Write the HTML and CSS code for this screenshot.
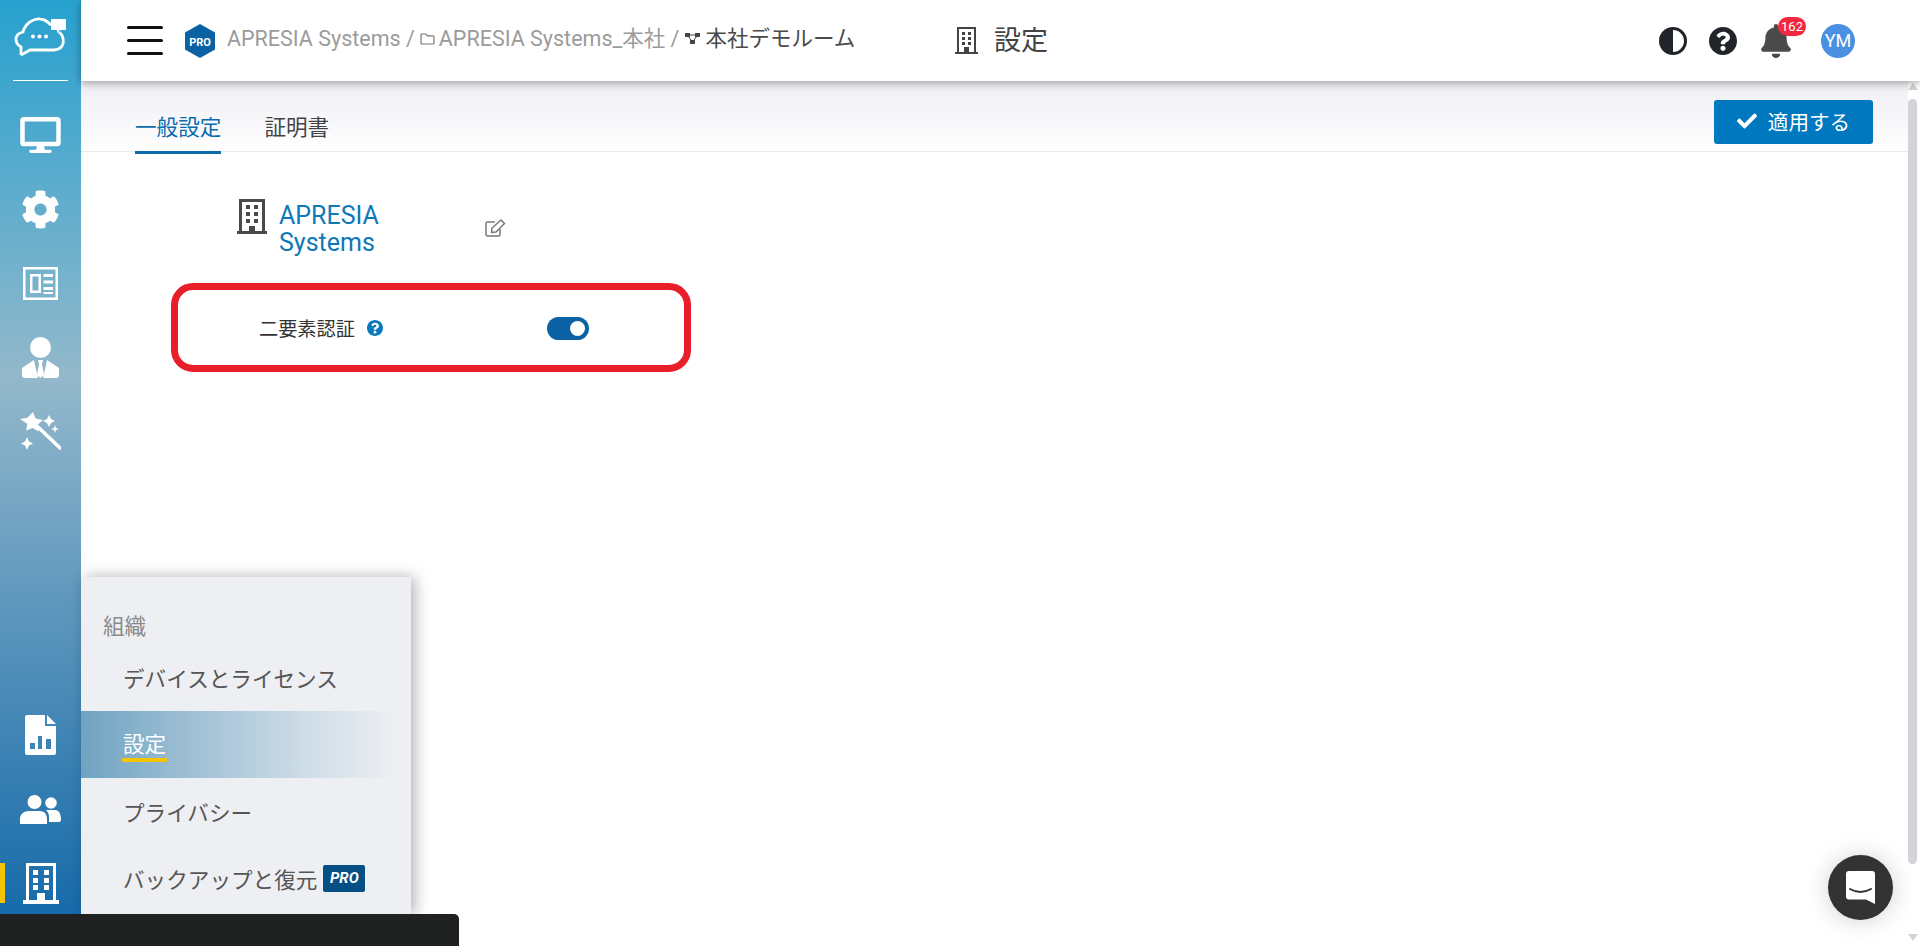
FILE: index.html
```html
<!DOCTYPE html>
<html lang="ja">
<head>
  <meta charset="UTF-8">
  <title>設定</title>
  <link rel="stylesheet" href="styles.css">
</head>
<body>
  <div class="app">
    <aside class="sidebar">
      <div class="logo">
        <svg width="54" height="42" viewBox="14 17 52 42" fill="none" stroke="#fff" stroke-width="2.8">
          <path d="M20 55V47C13 43 13 34 22 32C24 24 32 18 39 19C44 19 47 22 50 25"/>
          <path d="M58 32C64 37 65 49 53 50H29L20 55" stroke-linejoin="round"/>
          <path d="M50 19H65V30H59L56 33V30H50Z" fill="#fff" stroke="none"/>
          <circle cx="32" cy="36.500" r="2" fill="#fff" stroke="none"/>
          <circle cx="38.500" cy="36.500" r="2" fill="#fff" stroke="none"/>
          <circle cx="45" cy="36.500" r="2" fill="#fff" stroke="none"/>
        </svg>
      </div>
      <nav class="side-top">
        <div class="side-item">
          <svg width="41" height="36" viewBox="0 0 576 512" fill="#fff"><path d="M528 0H48C21.500 0 0 21.500 0 48v320c0 26.500 21.500 48 48 48h192l-16 48h-72c-13.300 0-24 10.700-24 24s10.700 24 24 24h272c13.300 0 24-10.700 24-24s-10.700-24-24-24h-72l-16-48h192c26.500 0 48-21.500 48-48V48c0-26.500-21.500-48-48-48zm-16 352H64V64h448v288z"/></svg>
        </div>
        <div class="side-item">
          <svg width="39" height="39" viewBox="0 0 512 512" fill="#fff"><path d="M487.400 315.700l-42.600-24.600c4.300-23.200 4.300-47 0-70.200l42.600-24.600c4.900-2.800 7.100-8.600 5.500-14-11.100-35.600-30-67.800-54.700-94.600-3.800-4.100-10-5.100-14.800-2.300L380.800 110c-17.900-15.400-38.500-27.300-60.800-35.100V25.800c0-5.600-3.900-10.500-9.400-11.700-36.700-8.200-74.300-7.800-109.200 0-5.500 1.200-9.400 6.100-9.400 11.700V75c-22.200 7.900-42.800 19.800-60.800 35.100L88.700 85.500c-4.900-2.800-11-1.900-14.800 2.300-24.700 26.700-43.600 58.900-54.700 94.600-1.700 5.400.6 11.200 5.500 14L67.300 221c-4.300 23.200-4.300 47 0 70.200l-42.600 24.600c-4.900 2.800-7.100 8.600-5.500 14 11.100 35.600 30 67.800 54.700 94.600 3.800 4.100 10 5.100 14.800 2.300l42.600-24.600c17.900 15.400 38.500 27.300 60.800 35.100v49.200c0 5.600 3.900 10.500 9.400 11.700 36.700 8.200 74.300 7.800 109.200 0 5.500-1.200 9.400-6.100 9.400-11.700v-49.200c22.200-7.900 42.800-19.800 60.800-35.100l42.600 24.600c4.900 2.800 11 1.900 14.800-2.300 24.700-26.700 43.600-58.900 54.700-94.600 1.500-5.500-.7-11.300-5.600-14.100zM256 336c-44.100 0-80-35.900-80-80s35.900-80 80-80 80 35.900 80 80-35.900 80-80 80z"/></svg>
        </div>
        <div class="side-item">
          <svg width="35" height="33" viewBox="0 0 35 33" fill="#fff"><path fill-rule="evenodd" d="M0 0H35V33H0ZM2.500 2.500V30.500H32.500V2.500ZM7 7H18V26H7ZM9.500 9.500V23.500H15.500V9.500ZM20.500 7H30V10H20.500ZM20.500 13.500H30V16.500H20.500ZM20.500 20H30V23H20.500ZM20.500 25H30V27H20.500Z"/></svg>
        </div>
        <div class="side-item">
          <svg width="37" height="41" viewBox="0 0 37 41" fill="#fff"><circle cx="18.500" cy="10.500" r="10.500"/><path d="M12 23L0 31V38Q0 41 3 41H16L13 28ZM25 23L37 31V38Q37 41 34 41H21L24 28ZM16 23H21L20 27L22 38L18.500 41L15 38L17 27Z"/></svg>
        </div>
        <div class="side-item">
          <svg class="side-wand" width="41" height="41" viewBox="0 0 41 41" fill="#fff"><path d="M13 0L15.500 6.500L23 8L18 12.500L18.500 19.500L12.500 16L6 18.500L7.500 12L0 7L7.500 5.800Z"/><path d="M18 15L40 36" stroke="#fff" stroke-width="3.600" stroke-linecap="round"/><path d="M29 3L31 7L35 9L31 11L29 15L27 11L23 9L27 7ZM35 13L36 16L39 17L36 18L35 21L34 18L31 17L34 16ZM7 25L9 29.500L13 31.500L9 33.500L7 38L5 33.500L1 31.500L5 29.500Z"/></svg>
        </div>
      </nav>
      <nav class="side-bottom">
        <div class="side-item">
          <svg width="31" height="40" viewBox="0 0 31 40" fill="#fff"><path fill-rule="evenodd" d="M2 0H20V11H31V38Q31 40 29 40H2Q0 40 0 38V2Q0 0 2 0ZM5 28V34H10V28ZM13 21V34H17V21ZM21 24V34H26V24Z"/><path d="M22 0L31 9H22Z"/></svg>
        </div>
        <div class="side-item">
          <svg width="41" height="29" viewBox="0 0 41 29" fill="#fff"><circle cx="14.500" cy="7" r="7"/><circle cx="31" cy="8" r="5.800"/><path d="M0 29V24C0 19 4 16 9 16H20C25 16 27 20 27 24V29ZM29 27V22C29 19 28 17 26 15H35C39 15 41 19 41 25Q41 27 39 27Z"/></svg>
        </div>
        <div class="side-item side-item-current">
          <svg width="36" height="41" viewBox="0 0 36 41" fill="#fff"><path fill-rule="evenodd" d="M3 0H33V37H36V41H0V37H3ZM6 3V37H14V30H22V37H30V3ZM10 7H15V12H10ZM21 7H26V12H21ZM10 15H15V20H10ZM21 15H26V20H21ZM10 22H15V27H10ZM21 22H26V27H21Z"/></svg>
        </div>
      </nav>
    </aside>

    <div class="page">
      <header class="topbar">
        <div class="hamburger"><span></span><span></span><span></span></div>
        <div class="crumbs">
          <svg class="pro-hex" width="30" height="34" viewBox="0 0 30 34"><path d="M15 0L30 8.500V25.500L15 34L0 25.500V8.500Z" fill="#0a62a5"/><text x="15" y="21.500" text-anchor="middle" class="pro-hex-text">PRO</text></svg>
          <span class="crumb">APRESIA Systems /</span>
          <svg class="crumb-icon" width="15" height="12" viewBox="0 0 15 12" fill="none" stroke="#777" stroke-width="1.200"><path d="M1 2Q1 1 2 1H6L7.500 2.800H13Q14 2.800 14 3.800V10Q14 11 13 11H2Q1 11 1 10Z"/></svg>
          <span class="crumb">APRESIA Systems_本社 /</span>
          <svg class="crumb-icon crumb-icon-last" width="15" height="13" viewBox="0 0 15 13" fill="#444"><rect x="0" y="1" width="5" height="4"/><rect x="10" y="1" width="5" height="4"/><rect x="5" y="8" width="5" height="4"/><path d="M3 4L7.500 10M12 4L7.500 10M3 3H12" stroke="#444" stroke-width="1"/></svg>
          <span class="crumb crumb-current">本社デモルーム</span>
        </div>
        <div class="page-title">
          <svg width="23" height="27" viewBox="0 0 23 27" fill="#444"><path fill-rule="evenodd" d="M2 0H21V25H23V27H0V25H2ZM4 2V25H9V20H14V25H19V2ZM7 5H10V8H7ZM13 5H16V8H13ZM7 10H10V13H7ZM13 10H16V13H13ZM7 15H10V18H7ZM13 15H16V18H13Z"/></svg>
          <span>設定</span>
        </div>
        <div class="top-actions">
          <svg width="28" height="28" viewBox="0 0 28 28"><circle cx="14" cy="14" r="12.500" fill="#fff" stroke="#212529" stroke-width="3"/><path d="M14 1A13 13 0 0 0 14 27Z" fill="#212529"/></svg>
          <svg width="28" height="28" viewBox="8 8 496 496" fill="#212529"><path d="M504 256c0 136.997-111.043 248-248 248S8 392.997 8 256C8 119.083 119.043 8 256 8s248 111.083 248 248zM262.655 90c-54.497 0-89.255 22.957-116.549 63.758-3.536 5.286-2.353 12.415 2.715 16.258l34.699 26.310c5.205 3.947 12.621 3.008 16.665-2.122 17.864-22.658 30.113-35.797 57.303-35.797 20.429 0 45.698 13.148 45.698 32.958 0 14.976-12.363 22.667-32.534 33.976C247.128 238.528 216 254.941 216 296v4c0 6.627 5.373 12 12 12h56c6.627 0 12-5.373 12-12v-1.333c0-28.462 83.186-29.647 83.186-106.667 0-58.002-60.165-102-116.531-102zM256 338c-25.365 0-46 20.635-46 46 0 25.364 20.635 46 46 46s46-20.636 46-46c0-25.365-20.635-46-46-46z"/></svg>
          <div class="bell">
            <svg width="30" height="34" viewBox="0 0 448 512" fill="#4a4a4a"><path d="M224 512c35.320 0 63.970-28.650 63.970-64H160.030c0 35.350 28.650 64 63.970 64zm215.390-149.710c-19.320-20.760-55.470-51.990-55.470-154.290 0-77.700-54.480-139.900-127.940-155.160V32c0-17.670-14.320-32-31.980-32s-31.980 14.330-31.980 32v20.840C118.560 68.100 64.080 130.300 64.080 208c0 102.300-36.150 133.530-55.470 154.290-6 6.450-8.660 14.160-8.610 21.710.11 16.400 12.980 32 32.100 32h383.800c19.120 0 32-15.600 32.100-32 .05-7.550-2.610-15.270-8.610-21.710z"/></svg>
            <span class="badge">162</span>
          </div>
          <div class="avatar">YM</div>
        </div>
      </header>

      <div class="body-row">
        <main class="content">
          <div class="tabbar">
            <a class="tab tab-active">一般設定</a>
            <a class="tab">証明書</a>
            <button class="apply-btn">
              <svg width="20" height="20" viewBox="0 0 512 512" fill="#fff"><path d="M173.898 439.404l-166.400-166.400c-9.997-9.997-9.997-26.206 0-36.204l36.203-36.204c9.997-9.998 26.207-9.998 36.204 0L192 312.690 432.095 72.596c9.997-9.997 26.207-9.997 36.204 0l36.203 36.204c9.997 9.997 9.997 26.206 0 36.204l-294.400 294.401c-9.998 9.997-26.207 9.997-36.204-.001z"/></svg>
              適用する
            </button>
          </div>

          <div class="org-row">
            <svg width="30" height="35" viewBox="0 0 30 35" fill="#4a4a4a"><path fill-rule="evenodd" d="M2 0H28V32H30V35H0V32H2ZM5 3V32H12V27H18V32H25V3ZM9 6H13V10H9ZM17 6H21V10H17ZM9 13H13V17H9ZM17 13H21V17H17ZM9 20H13V24H9ZM17 20H21V24H17Z"/></svg>
            <div class="org-name">APRESIA<br>Systems</div>
            <svg class="org-edit" width="21" height="18" viewBox="0 0 21 18" fill="none" stroke="#777" stroke-width="1.500"><path d="M10 3H2.500Q1 3 1 4.500V15.500Q1 17 2.500 17H13.500Q15 17 15 15.500V10"/><path d="M7 9L16 1L19.500 4.500L11 13L6.500 13.500Z" stroke-linejoin="round"/></svg>
          </div>

          <div class="mfa-box">
            <span class="mfa-label">二要素認証</span>
            <svg class="mfa-help" width="16" height="16" viewBox="8 8 496 496" fill="#0b78bd"><path d="M504 256c0 136.997-111.043 248-248 248S8 392.997 8 256C8 119.083 119.043 8 256 8s248 111.083 248 248zM262.655 90c-54.497 0-89.255 22.957-116.549 63.758-3.536 5.286-2.353 12.415 2.715 16.258l34.699 26.310c5.205 3.947 12.621 3.008 16.665-2.122 17.864-22.658 30.113-35.797 57.303-35.797 20.429 0 45.698 13.148 45.698 32.958 0 14.976-12.363 22.667-32.534 33.976C247.128 238.528 216 254.941 216 296v4c0 6.627 5.373 12 12 12h56c6.627 0 12-5.373 12-12v-1.333c0-28.462 83.186-29.647 83.186-106.667 0-58.002-60.165-102-116.531-102zM256 338c-25.365 0-46 20.635-46 46 0 25.364 20.635 46 46 46s46-20.636 46-46c0-25.365-20.635-46-46-46z"/></svg>
            <div class="toggle"><span class="toggle-knob"></span></div>
          </div>
        </main>

        <div class="scrollbar">
          <span class="scroll-up"></span>
          <span class="scroll-thumb"></span>
          <span class="scroll-down"></span>
        </div>
      </div>
    </div>
  </div>

  <div class="flyout">
    <div class="flyout-title">組織</div>
    <div class="flyout-item">デバイスとライセンス</div>
    <div class="flyout-item flyout-item-active"><span class="flyout-current">設定</span></div>
    <div class="flyout-item">プライバシー</div>
    <div class="flyout-item">バックアップと復元<span class="pro-tag">PRO</span></div>
  </div>

  <div class="dark-bar"></div>

  <div class="chat-btn">
    <svg width="29" height="33" viewBox="0 0 29 33"><path d="M3 0H26Q29 0 29 3V33L20 28.500H3Q0 28.500 0 25.500V3Q0 0 3 0Z" fill="#fff"/><path d="M4 18Q14.500 24 25 18" fill="none" stroke="#333" stroke-width="2" stroke-linecap="round"/></svg>
  </div>
</body>
</html>
```

FILE: styles.css
```css
* {
  box-sizing: border-box;
}
html, body {
  margin: 0;
  height: 100%;
  overflow: hidden;
}
body {
  background-color: #fff;
  color: #444;
  font-family: Roboto, "Noto Sans CJK JP", sans-serif;
  font-size: 21.6px;
}
.app {
  display: flex;
  height: 946px;
}

/* left rail */
.sidebar {
  width: 81px;
  flex: none;
  display: flex;
  flex-direction: column;
  background: linear-gradient(180deg, #27a1cf 0%, #93b8cb 40%, #0f66a8 100%);
}
.logo {
  height: 81px;
  margin: 0 13px;
  border-bottom: 1px solid #fff;
  display: flex;
  justify-content: center;
  padding-top: 17px;
}
.side-top {
  padding-top: 17px;
}
.side-wand {
  margin-top: 2px;
}
.side-bottom {
  margin-top: auto;
  padding-bottom: 26px;
}
.side-item {
  height: 74px;
  display: flex;
  align-items: center;
  justify-content: center;
}
.side-item-current {
  background: linear-gradient(#f5c400, #f5c400) no-repeat 0 center / 5px 40px;
}

/* right of the rail */
.page {
  flex: 1;
  min-width: 0;
  display: flex;
  flex-direction: column;
}
.topbar {
  height: 81px;
  flex: none;
  display: flex;
  align-items: center;
  padding: 0 65px 0 46px;
  background-color: #fff;
  box-shadow: 0 2px 8px rgba(0, 0, 0, 0.35);
  position: relative;
  z-index: 2;
}
.hamburger {
  width: 36px;
  display: flex;
  flex-direction: column;
  gap: 10px;
  margin-right: 22px;
}
.hamburger span {
  height: 3px;
  background-color: #111;
  border-radius: 2px;
}
.crumbs {
  width: 770px;
  display: flex;
  align-items: center;
  margin-top: -4px;
  white-space: nowrap;
}
.pro-hex {
  margin-right: 12px;
  margin-top: 4px;
}
.pro-hex-text {
  fill: #fff;
  font-family: Roboto, sans-serif;
  font-size: 11px;
  font-weight: 700;
}
.crumb {
  color: #9b9b9b;
  font-size: 21.5px;
  line-height: 28px;
  height: 28px;
}
.crumb-icon {
  margin: 0 4px 0 5px;
}
.crumb-icon-last {
  margin: 0 5px 0 6px;
}
.crumb-current {
  color: #4a4a4a;
}
.page-title {
  display: flex;
  align-items: center;
  gap: 16px;
  font-size: 27px;
  line-height: 32px;
  color: #444;
}
.top-actions {
  margin-left: auto;
  display: flex;
  align-items: center;
}
.top-actions > svg + svg {
  margin-left: 22px;
}
.bell {
  position: relative;
  height: 34px;
  margin-left: 24px;
  margin-right: 30px;
}
.badge {
  position: absolute;
  left: 17px;
  top: -7px;
  width: 28px;
  height: 19px;
  border-radius: 10px;
  background-color: #f2283f;
  color: #fff;
  font-size: 13px;
  line-height: 19px;
  text-align: center;
}
.avatar {
  width: 34px;
  height: 34px;
  border-radius: 50%;
  background-color: #4a90e2;
  color: #fff;
  font-size: 18px;
  line-height: 34px;
  text-align: center;
}

.body-row {
  flex: 1;
  min-height: 0;
  display: flex;
}
.content {
  flex: 1;
  min-width: 0;
}
.tabbar {
  height: 71px;
  display: flex;
  align-items: flex-start;
  padding: 0 35px 0 54px;
  gap: 43px;
  background: linear-gradient(180deg, #eeeef5 0%, #fff 100%);
  border-bottom: 1px solid #e9e9ec;
}
.tab {
  height: 73px;
  padding-top: 32px;
  line-height: 30px;
  color: #444;
}
.tab-active {
  color: #0a6cad;
  border-bottom: 3px solid #0a6cad;
}
.apply-btn {
  margin: 19px 0 0 auto;
  width: 159px;
  height: 44px;
  padding: 0 0 3px;
  border: none;
  border-radius: 3px;
  background-color: #0078c0;
  color: #fff;
  font: inherit;
  font-size: 20.6px;
  display: flex;
  align-items: center;
  justify-content: center;
  gap: 11px;
}

.org-row {
  display: flex;
  align-items: flex-start;
  margin: 47px 0 0 156px;
}
.org-name {
  width: 206px;
  margin-left: 12px;
  font-size: 25px;
  line-height: 27px;
  color: #0f78b8;
  margin-top: 3px;
}
.org-edit {
  margin-top: 20px;
}

.mfa-box {
  width: 520px;
  height: 89px;
  margin: 27px 0 0 90px;
  border: 7px solid #e81f2a;
  border-radius: 22px;
  display: flex;
  align-items: center;
  padding-left: 81px;
}
.mfa-label {
  font-size: 19.2px;
  color: #333;
}
.mfa-help {
  margin-left: 12px;
}
.toggle {
  width: 42px;
  height: 23px;
  margin: 2px 0 0 164px;
  border-radius: 12px;
  background-color: #0a62a5;
  display: flex;
  align-items: center;
  justify-content: flex-end;
  padding-right: 4px;
}
.toggle-knob {
  width: 15px;
  height: 15px;
  border-radius: 50%;
  background-color: #fff;
}

.scrollbar {
  width: 12px;
  flex: none;
  display: flex;
  flex-direction: column;
  align-items: flex-start;
  padding-top: 2px;
}
.scroll-up,
.scroll-down {
  width: 0;
  height: 0;
  border-left: 5px solid transparent;
  border-right: 5px solid transparent;
}
.scroll-up {
  border-bottom: 7px solid #d4d4d8;
}
.scroll-thumb {
  width: 9px;
  height: 765px;
  margin-top: 9px;
  border-radius: 5px;
  background-color: #d4d4d8;
}
.scroll-down {
  margin-top: 70px;
  border-top: 7px solid #d4d4d8;
}

/* hover menu over the page */
.flyout {
  position: absolute;
  left: 81px;
  top: 577px;
  width: 330px;
  height: 337px;
  background-color: #eeeff2;
  box-shadow: 4px 0 14px rgba(0, 0, 0, 0.3);
  z-index: 3;
  padding-top: 36px;
}
.flyout-title {
  height: 31px;
  line-height: 28px;
  padding-left: 22px;
  color: #8a8a8a;
}
.flyout-item {
  height: 67px;
  display: flex;
  align-items: center;
  padding-left: 42px;
  color: #555;
  white-space: nowrap;
}
.flyout-item-active {
  background: linear-gradient(90deg, #6fa3c2 0%, #a8c5d8 40%, #d3e0e9 72%, #eeeff2 96%);
}
.flyout-current {
  color: #fff;
  border-bottom: 4px solid #f5c400;
  line-height: 26px;
  padding: 0 1px;
  margin: 4px 0 0 -1px;
}
.pro-tag {
  width: 42px;
  height: 27px;
  margin-left: 6px;
  border-radius: 2px;
  background-color: #054f85;
  color: #fff;
  font-size: 15px;
  font-weight: 700;
  font-style: italic;
  line-height: 27px;
  text-align: center;
}
.dark-bar {
  position: absolute;
  left: 0;
  bottom: 0;
  width: 459px;
  height: 32px;
  background-color: #202222;
  border-top-right-radius: 5px;
  z-index: 4;
}
.chat-btn {
  position: absolute;
  left: 1828px;
  top: 855px;
  width: 65px;
  height: 65px;
  border-radius: 50%;
  background-color: #333;
  box-shadow: 0 1px 24px rgba(0, 0, 0, 0.18);
  display: flex;
  align-items: center;
  justify-content: center;
  z-index: 4;
}
```
